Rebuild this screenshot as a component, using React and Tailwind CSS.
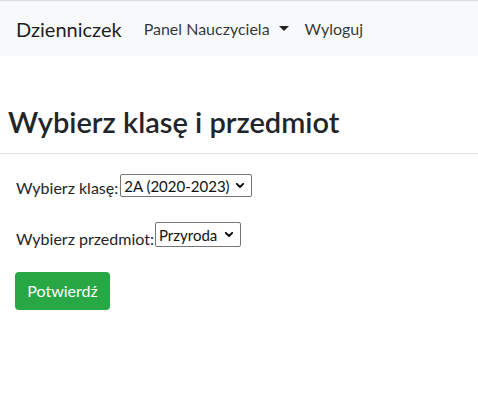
function Chevron() {
  return (
    <svg width="8" height="5" viewBox="0 0 8 5" className="shrink-0" aria-hidden="true">
      <path d="M0.8 0.8 L4 4 L7.2 0.8" fill="none" stroke="#000" strokeWidth="1.8" strokeLinecap="round" strokeLinejoin="round" />
    </svg>
  );
}

function FakeSelect({ value, className }) {
  return (
    <div className={`flex items-center justify-between border border-[#767676] rounded-[2px] bg-white pl-[3px] pr-[7px] text-[15px] leading-[18px] text-[#111] ${className}`}>
      <span>{value}</span>
      <Chevron />
    </div>
  );
}

export default function App() {
  return (
    <div className="min-h-screen bg-white text-[#212529]" style={{ fontFamily: 'Lato, "Noto Sans", sans-serif' }}>
      <nav className="h-[56px] border-t border-[#dcdcdc] bg-[#f8f9fa] flex items-center px-4">
        <span className="text-[20px] leading-[30px] mr-[14px] text-black/90">Dzienniczek</span>
        <a className="px-2 flex items-center text-[16px] leading-6 text-black/80">
          Panel Nauczyciela
          <svg width="10" height="5" viewBox="0 0 10 5" className="ml-[9px]" aria-hidden="true">
            <path d="M0 0 L10 0 L5 5 Z" fill="#222" />
          </svg>
        </a>
        <a className="px-2 text-[16px] leading-6 text-black/80">Wyloguj</a>
      </nav>

      <div className="pl-2 mt-[48px] pb-[14px] border-b border-[#dee2e6]">
        <h3 className="text-[29px] leading-[35px] font-semibold text-[#212529]">Wybierz klasę i przedmiot</h3>
      </div>

      <div className="px-4 pt-5">
        <div className="flex items-start">
          <label className="text-[16px] leading-6 mt-[2px] mr-[2px]">Wybierz klasę:</label>
          <FakeSelect value="2A (2020-2023)" className="h-[23px] w-[132px]" />
        </div>
        <div className="flex items-start mt-[22px]">
          <label className="text-[16px] leading-6 mt-[5px] mr-[1px]">Wybierz przedmiot:</label>
          <FakeSelect value="Przyroda" className="h-[25px] w-[86px]" />
        </div>
        <button className="mt-[21px] ml-[-1px] h-[38px] w-[95px] rounded-[4px] bg-[#28a745] text-white text-[16px] leading-6 flex items-center justify-center">
          Potwierdź
        </button>
      </div>
    </div>
  );
}
